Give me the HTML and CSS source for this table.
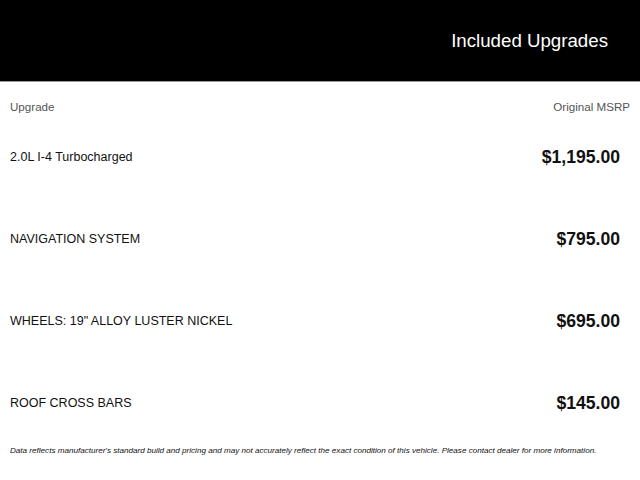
FILE: index.html
```html
<!DOCTYPE html>
<html>
<head>
<meta charset="utf-8">
<link rel="stylesheet" href="styles.css">
</head>
<body>
<header class="banner">
  <h1 class="title">Included Upgrades</h1>
</header>
<div class="cols">
  <span>Upgrade</span>
  <span>Original MSRP</span>
</div>
<ul class="list">
  <li class="row"><span class="name">2.0L I-4 Turbocharged</span><span class="price">$1,195.00</span></li>
  <li class="row"><span class="name">NAVIGATION SYSTEM</span><span class="price">$795.00</span></li>
  <li class="row"><span class="name">WHEELS: 19" ALLOY LUSTER NICKEL</span><span class="price">$695.00</span></li>
  <li class="row"><span class="name">ROOF CROSS BARS</span><span class="price">$145.00</span></li>
</ul>
<p class="note">Data reflects manufacturer's standard build and pricing and may not accurately reflect the exact condition of this vehicle. Please contact dealer for more information.</p>
</body>
</html>
```
FILE: styles.css
```css
* { box-sizing: border-box; }
html, body { margin: 0; padding: 0; background: #fff; }
body { font-family: "Liberation Sans", Arial, sans-serif; color: #111; width: 640px; }
.banner {
  height: 82px;
  background: #000;
  border-bottom: 1px solid #9a9a9a;
  display: flex;
  align-items: center;
  justify-content: flex-end;
  padding: 1px 32px 0 10px;
}
.title {
  margin: 0;
  color: #fff;
  font-weight: normal;
  font-size: 18.7px;
}
.cols {
  display: flex;
  justify-content: space-between;
  padding: 18px 10px 0;
  font-size: 11.6px;
  color: #555;
  height: 48px;
}
.list { list-style: none; margin: 0; padding: 0; }
.row {
  display: flex;
  justify-content: space-between;
  align-items: center;
  height: 82px;
  padding: 0 20px 0 10px;
}
.row:first-child { margin-top: -14px; }
.name { font-size: 12.5px; }
.price { font-size: 17.6px; font-weight: bold; }
.note {
  margin: 2px 0 0;
  padding: 0 10px;
  font-size: 8.1px;
  font-style: italic;
}
```
